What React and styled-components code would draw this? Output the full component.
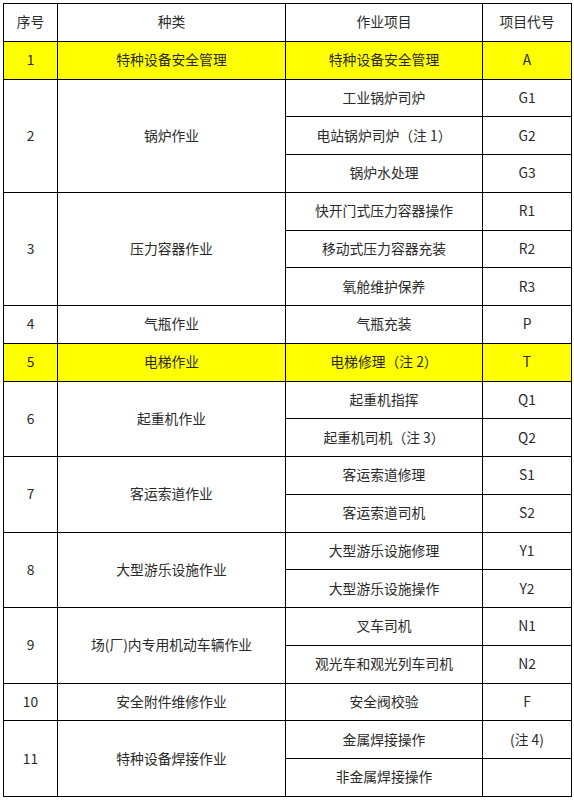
import React from "react";
import styled, { createGlobalStyle } from "styled-components";

const GlobalStyle = createGlobalStyle`
  html, body {
    margin: 0;
    padding: 0;
    background: #fff;
  }
  body {
    font-family: "Noto Sans CJK SC", "Noto Sans", sans-serif;
  }
`;

const rows = [
  {
    no: "1",
    kind: "特种设备安全管理",
    highlight: true,
    items: [{ name: "特种设备安全管理", code: "A" }],
  },
  {
    no: "2",
    kind: "锅炉作业",
    items: [
      { name: "工业锅炉司炉", code: "G1" },
      { name: "电站锅炉司炉（注 1）", code: "G2" },
      { name: "锅炉水处理", code: "G3" },
    ],
  },
  {
    no: "3",
    kind: "压力容器作业",
    items: [
      { name: "快开门式压力容器操作", code: "R1" },
      { name: "移动式压力容器充装", code: "R2" },
      { name: "氧舱维护保养", code: "R3" },
    ],
  },
  {
    no: "4",
    kind: "气瓶作业",
    items: [{ name: "气瓶充装", code: "P" }],
  },
  {
    no: "5",
    kind: "电梯作业",
    highlight: true,
    items: [{ name: "电梯修理（注 2）", code: "T" }],
  },
  {
    no: "6",
    kind: "起重机作业",
    items: [
      { name: "起重机指挥", code: "Q1" },
      { name: "起重机司机（注 3）", code: "Q2" },
    ],
  },
  {
    no: "7",
    kind: "客运索道作业",
    items: [
      { name: "客运索道修理", code: "S1" },
      { name: "客运索道司机", code: "S2" },
    ],
  },
  {
    no: "8",
    kind: "大型游乐设施作业",
    items: [
      { name: "大型游乐设施修理", code: "Y1" },
      { name: "大型游乐设施操作", code: "Y2" },
    ],
  },
  {
    no: "9",
    kind: "场(厂)内专用机动车辆作业",
    items: [
      { name: "叉车司机", code: "N1" },
      { name: "观光车和观光列车司机", code: "N2" },
    ],
  },
  {
    no: "10",
    kind: "安全附件维修作业",
    items: [{ name: "安全阀校验", code: "F" }],
  },
  {
    no: "11",
    kind: "特种设备焊接作业",
    items: [
      { name: "金属焊接操作", code: "(注 4)" },
      { name: "非金属焊接操作", code: "" },
    ],
  },
];

const Page = styled.div`
  padding: 3px 3px 0 3px;
`;

const Table = styled.table`
  width: 568px;
  border-collapse: collapse;
  table-layout: fixed;
  font-size: 13.8px;
  color: #2a2a2a;
`;

const Row = styled.tr`
  height: 37.76px;
  background: ${(p) => (p.$highlight ? "#ffff00" : "#fff")};
`;

const Cell = styled.td`
  border: 1.5px solid #000;
  padding: 0;
  text-align: center;
  vertical-align: middle;
  white-space: nowrap;
  line-height: 1;
`;

const Head = styled(Cell).attrs({ as: "th" })`
  font-weight: 400;
`;

export default function App() {
  return (
    <Page>
      <GlobalStyle />
      <Table>
        <colgroup>
          <col style={{ width: 54 }} />
          <col style={{ width: 228 }} />
          <col style={{ width: 197 }} />
          <col style={{ width: 89 }} />
        </colgroup>
        <thead>
          <Row>
            <Head>序号</Head>
            <Head>种类</Head>
            <Head>作业项目</Head>
            <Head>项目代号</Head>
          </Row>
        </thead>
        <tbody>
          {rows.map((r) =>
            r.items.map((it, i) => (
              <Row key={r.no + "-" + i} $highlight={r.highlight}>
                {i === 0 && (
                  <>
                    <Cell rowSpan={r.items.length}>{r.no}</Cell>
                    <Cell rowSpan={r.items.length}>{r.kind}</Cell>
                  </>
                )}
                <Cell>{it.name}</Cell>
                <Cell>{it.code}</Cell>
              </Row>
            ))
          )}
        </tbody>
      </Table>
    </Page>
  );
}
